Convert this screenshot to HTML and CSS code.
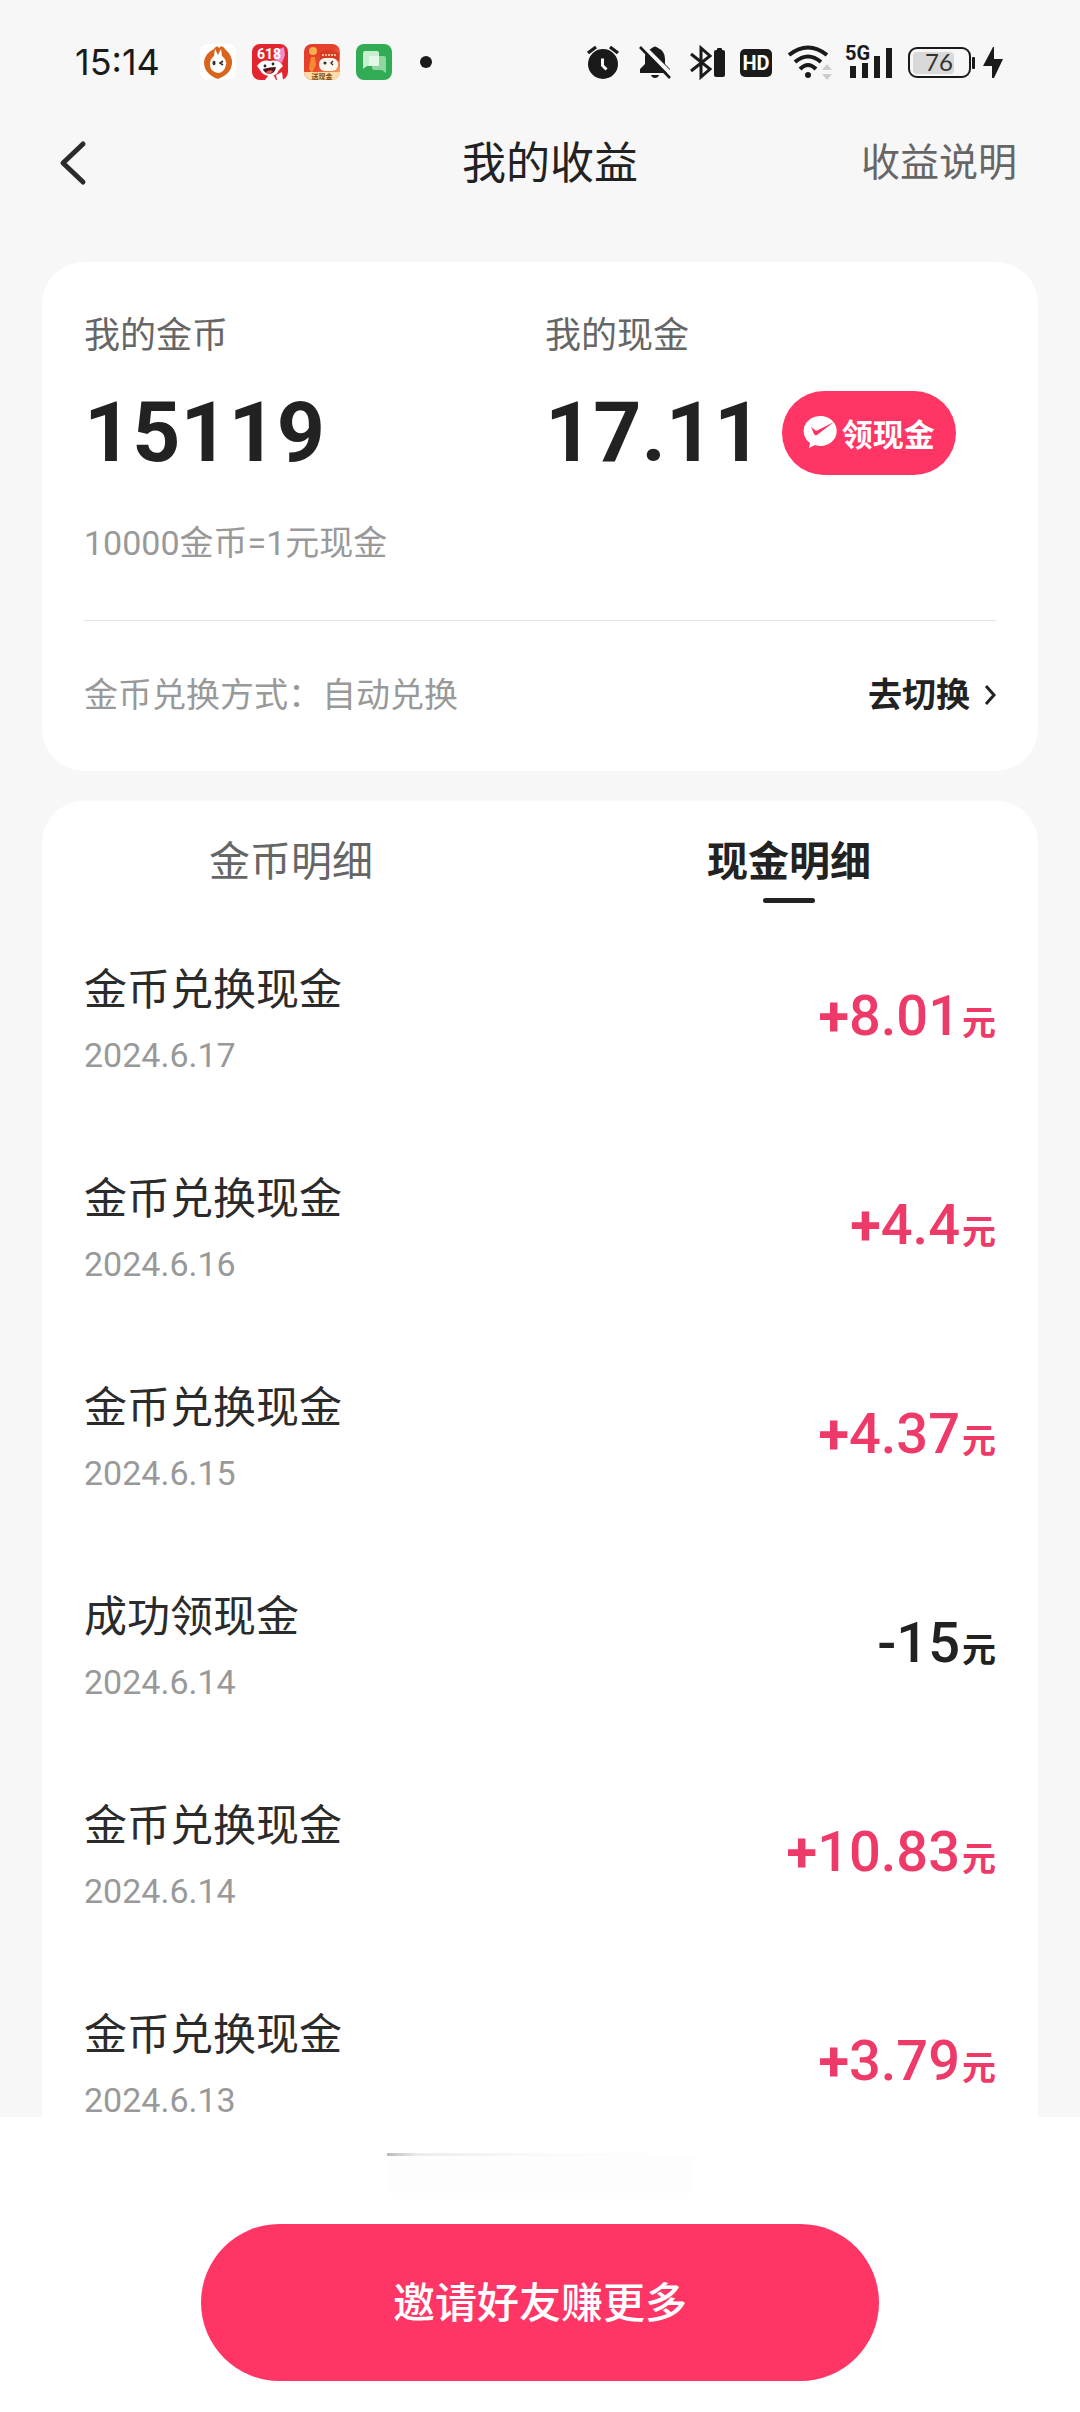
FILE: index.html
```html
<!DOCTYPE html>
<html lang="zh-CN">
<head>
<meta charset="utf-8">
<meta name="viewport" content="width=device-width">
<title>我的收益</title>
<link rel="stylesheet" href="styles.css">
</head>
<body>
<header>
  <div class="status">
    <div class="status-left">
      <span class="clock">15:14</span>
      <div class="apps">
        <svg class="app" viewBox="0 0 36 36" aria-hidden="true">
          <rect width="36" height="36" rx="8" fill="#fff"/>
          <path d="M14 5 Q17 0 19 4 Q22 0 25 5 Q33 12 32 20 Q31 30 18 35 Q4 30 4 18 Q5 9 14 5Z" fill="#d9651c"/>
          <path d="M14 12 L15 5 L18 11 L21 5 L22 12 Q27 16 26 21 Q24 29 18 29 Q10 28 10 20 Q10 15 14 12Z" fill="#fff"/>
          <ellipse cx="14" cy="19" rx="1.6" ry="2.2" fill="#333"/>
          <path d="M23 17l-3 2 3 2" fill="none" stroke="#333" stroke-width="1.6"/>
        </svg>
        <svg class="app" viewBox="0 0 36 36" aria-hidden="true">
          <rect width="36" height="36" rx="8" fill="#e3262d"/>
          <path d="M25 6l7-3 1 8-3 8-8-4z" fill="#f28bd0"/>
          <path d="M5 22 Q10 15 18 17 Q27 15 31 22 L27 26 Q24 33 17 32 Q10 31 8 26Z" fill="#fff"/>
          <path d="M11 25 Q18 23 24 23 Q23 30 17 30 Q12 29 11 25Z" fill="#4a1518"/>
          <path d="M14 28q4-3 7-1-2 3-4 3-2 0-3-2z" fill="#f0584f"/>
          <path d="M13 36l3-4h6l2 4zM25 36l-1-5 6-3 1 8z" fill="#fff"/>
          <circle cx="13" cy="22" r="1.4" fill="#222"/><circle cx="21" cy="20" r="1.4" fill="#222"/>
          <text class="app-618" x="17" y="15" text-anchor="middle">618</text>
        </svg>
        <svg class="app" viewBox="0 0 36 36" aria-hidden="true">
          <defs><clipPath id="c3"><rect width="36" height="36" rx="8"/></clipPath>
          <linearGradient id="g3" x1="0" y1="0" x2="1" y2="1"><stop offset="0" stop-color="#e03a2b"/><stop offset=".5" stop-color="#e8452c"/><stop offset="1" stop-color="#f7c069"/></linearGradient></defs>
          <g clip-path="url(#c3)">
            <rect width="36" height="36" fill="url(#g3)"/>
            <circle cx="9" cy="7" r="4" fill="#f9b04d"/>
            <path d="M7 13l4 0 1 8-4 8-3-4z" fill="#f58a32"/>
            <path d="M16 9 Q25 2 35 9 V17 H16Z" fill="#d83a26"/>
            <path d="M18 11h15" stroke="#f5b985" stroke-width="2" stroke-dasharray="2 1"/>
            <rect x="15" y="14" width="19" height="13" rx="6" fill="#fff6ee"/>
            <circle cx="21" cy="19" r="1.6" fill="#333"/><path d="M29 17l-2 2 2 2" fill="none" stroke="#333" stroke-width="1.4"/>
            <rect y="28" width="36" height="8" fill="#fbdca6"/>
          </g>
          <text class="app-tag" x="18" y="35" text-anchor="middle">送现金</text>
        </svg>
        <svg class="app" viewBox="0 0 36 36" aria-hidden="true">
          <rect width="36" height="36" rx="8" fill="#31ac54"/>
          <path d="M17 12h11q2 0 2 2v15l-4-3H18q-2 0-2-2z" fill="#8fd6a0"/>
          <path d="M9 7h12q2 0 2 2v11q0 2-2 2H11l-4 3V9q0-2 2-2z" fill="#c9efd1"/>
          <rect x="13" y="12" width="10" height="10" rx="1" fill="#e3f8e7"/>
        </svg>
        <span class="dot"></span>
      </div>
    </div>
    <div class="status-right">
      <svg width="36" height="36" viewBox="0 0 36 36" aria-hidden="true">
        <circle cx="16" cy="20" r="15" fill="#1a1a1a"/>
        <path d="M1 9l8-6M31 9l-8-6" stroke="#1a1a1a" stroke-width="3.4"/>
        <path d="M15.500 14.500v7l4 4" fill="none" stroke="#f7f7f7" stroke-width="3"/>
      </svg>
      <svg width="37" height="36" viewBox="0 0 37 36" aria-hidden="true">
        <path d="M14 4q3-3 6 0 7 3 7 11v5l5 5v4H2v-4l5-5v-7q0-5 4-7z" fill="#1a1a1a"/>
        <path d="M13 31h8q-1 3-4 3t-4-3z" fill="#1a1a1a"/>
        <path d="M4 1L35 32" stroke="#f7f7f7" stroke-width="4"/>
        <path d="M2 3L32 34" stroke="#1a1a1a" stroke-width="2.600"/>
      </svg>
      <svg width="35" height="36" viewBox="0 0 35 36" aria-hidden="true">
        <path d="M1 10l19 15-9 8V4l9 8L1 27" fill="none" stroke="#1a1a1a" stroke-width="3"/>
        <rect x="24" y="6" width="11" height="27" rx="2" fill="#1a1a1a"/><rect x="27" y="4" width="5" height="3" rx="1" fill="#1a1a1a"/>
      </svg>
      <svg width="33" height="36" viewBox="0 0 33 36" aria-hidden="true">
        <rect y="5" width="32" height="28" rx="5" fill="#1a1a1a"/>
        <text class="hd" x="16" y="26" text-anchor="middle">HD</text>
      </svg>
      <svg width="44" height="36" viewBox="0 0 44 36" aria-hidden="true">
        <g fill="none" stroke="#1a1a1a" stroke-width="4"><path d="M1 11q19-15 38 0"/><path d="M7 18q13-11 26 0"/><path d="M12 25q8-8 16 0"/></g>
        <circle cx="20" cy="31" r="3" fill="#1a1a1a"/>
        <path d="M34 26l5-6 5 6zM34 30h10l-5 6z" fill="#ccc"/>
      </svg>
      <svg width="46" height="36" viewBox="0 0 46 36" aria-hidden="true">
        <path d="M3 22h6v12H3zM15 19h6v15h-6zM27 12h6v22h-6zM39 4h6v30h-6z" fill="#1a1a1a"/>
        <text class="net" x="-2" y="16">5G</text>
      </svg>
      <svg width="95" height="36" viewBox="0 0 95 36" aria-hidden="true">
        <rect x="1" y="4" width="61" height="29" rx="8" fill="none" stroke="#1a1a1a" stroke-width="2"/>
        <rect x="5" y="8" width="41" height="22" rx="4" fill="#d9d9d9"/>
        <rect x="64" y="13" width="3" height="12" rx="1" fill="#1a1a1a"/>
        <text class="level" x="31" y="27" text-anchor="middle">76</text>
        <path d="M85 3L75 22h9l0 12h2l9-19h-9V3z" fill="#1a1a1a"/>
      </svg>
    </div>
  </div>
  <nav class="nav">
    <button class="back" type="button" aria-label="返回">
      <svg width="28" height="46" viewBox="0 0 28 46" aria-hidden="true"><path d="M24 4L4 23l20 19" fill="none" stroke="#2b2b2b" stroke-width="5" stroke-linecap="round" stroke-linejoin="round"/></svg>
    </button>
    <h1 class="title">我的收益</h1>
    <a class="help" href="#help">收益说明</a>
  </nav>
</header>

<main>
  <section class="card">
    <div class="balances">
      <div>
        <div class="label">我的金币</div>
        <div class="value"><span class="figure">15119</span></div>
      </div>
      <div>
        <div class="label">我的现金</div>
        <div class="value">
          <span class="figure">17.11</span>
          <button class="cash" type="button">
            <svg width="32" height="32" viewBox="0 0 32 32" aria-hidden="true"><path d="M16 0a16 15 0 1 1-5 29l-6 3 1-5A16 15 0 0 1 16 0z" fill="#fff"/><path d="M7 11l4 3q1 1 3 0L30 6 13 19q-2 1-3-1z" fill="#ff3565"/></svg>
            领现金
          </button>
        </div>
      </div>
    </div>
    <p class="rate">10000金币=1元现金</p>
    <div class="method">
      <span>金币兑换方式：自动兑换</span>
      <a class="switch" href="#switch">去切换
        <svg width="12" height="20" viewBox="0 0 12 20" aria-hidden="true"><path d="M2 1l8 9-8 9" fill="none" stroke="#222" stroke-width="3"/></svg>
      </a>
    </div>
  </section>

  <section class="card">
    <div class="tabs" role="tablist">
      <button class="tab" type="button" role="tab" aria-selected="false">金币明细</button>
      <button class="tab active" type="button" role="tab" aria-selected="true">现金明细</button>
    </div>
    <ul class="list">
      <li class="row"><div><div class="name">金币兑换现金</div><time class="date">2024.6.17</time></div><div class="amount"><span class="sign">+</span>8.01<span class="unit">元</span></div></li>
      <li class="row"><div><div class="name">金币兑换现金</div><time class="date">2024.6.16</time></div><div class="amount"><span class="sign">+</span>4.4<span class="unit">元</span></div></li>
      <li class="row"><div><div class="name">金币兑换现金</div><time class="date">2024.6.15</time></div><div class="amount"><span class="sign">+</span>4.37<span class="unit">元</span></div></li>
      <li class="row"><div><div class="name">成功领现金</div><time class="date">2024.6.14</time></div><div class="amount out">-15<span class="unit">元</span></div></li>
      <li class="row"><div><div class="name">金币兑换现金</div><time class="date">2024.6.14</time></div><div class="amount"><span class="sign">+</span>10.83<span class="unit">元</span></div></li>
      <li class="row"><div><div class="name">金币兑换现金</div><time class="date">2024.6.13</time></div><div class="amount"><span class="sign">+</span>3.79<span class="unit">元</span></div></li>
    </ul>
  </section>
</main>

<footer class="footer">
  <div class="streak"></div>
  <button class="invite" type="button">邀请好友赚更多</button>
</footer>
</body>
</html>
```
FILE: styles.css
```css
* { box-sizing: border-box; }

body {
  margin: 0;
  height: 100vh;
  display: flex;
  flex-direction: column;
  background: #f7f7f7;
  color: #222;
  font-family: Roboto, "Noto Sans CJK SC", sans-serif;
}

button {
  border: 0;
  padding: 0;
  background: none;
  color: inherit;
  font: inherit;
}

a { color: inherit; text-decoration: none; }
svg { display: block; flex: none; overflow: visible; }
h1, p, ul { margin: 0; padding: 0; font-weight: 400; }

/* Status bar */
.status {
  height: 124px;
  padding: 0 77px 0 75px;
  display: flex;
  align-items: center;
  justify-content: space-between;
}
.status-left { display: flex; align-items: center; gap: 40px; }
.clock { font-family: Inter, Roboto, sans-serif; font-size: 36px; line-height: 40px; color: #1a1a1a; }
.apps { display: flex; align-items: center; gap: 16px; }
.app { width: 36px; height: 36px; }
.app-618 { font: 700 14px Roboto, sans-serif; fill: #fff; }
.app-tag { font: 700 7px "Noto Sans CJK SC", sans-serif; fill: #7a4a20; }
.dot { width: 12px; height: 12px; margin-left: 12px; border-radius: 50%; background: #1a1a1a; }
.status-right { display: flex; align-items: center; gap: 15px; }
.hd { font: 700 20px Roboto, sans-serif; fill: #fff; }
.net { font: 700 20px Roboto, sans-serif; fill: #1a1a1a; }
.level { font: 400 24px Lato, sans-serif; fill: #333; }

/* Navigation */
.nav {
  height: 78px;
  padding: 0 63px 0 83px;
  display: grid;
  grid-template-columns: 1fr auto 1fr;
  align-items: center;
}
.back { justify-self: start; margin-left: -24px; }
.title { padding-top: 2px; font-size: 44px; line-height: 60px; }
.help { justify-self: end; font-size: 39px; line-height: 60px; color: #666; }

/* Cards */
main {
  flex: 1;
  min-height: 0;
  overflow: hidden;
  padding: 60px 42px 0;
}
.card {
  padding: 0 42px;
  border-radius: 42px;
  background: #fff;
}
.card + .card { margin-top: 30px; border-radius: 42px 42px 0 0; }

.balances {
  padding-top: 49px;
  display: grid;
  grid-template-columns: 1fr 1fr;
  column-gap: 10px;
}
.label { font-size: 36px; line-height: 50px; color: #666; }
.value { margin-top: 30px; height: 84px; display: flex; align-items: center; gap: 20px; }
.figure { font-size: 84px; line-height: 84px; font-weight: 700; }
.cash {
  width: 174px;
  height: 84px;
  padding-bottom: 2px;
  display: flex;
  align-items: center;
  justify-content: center;
  gap: 6px;
  border-radius: 42px;
  background: #ff3565;
  color: #fff;
  font-size: 31px;
  font-weight: 700;
}
.rate { margin-top: 48px; font-size: 34px; line-height: 40px; color: #999; }
.method {
  margin-top: 57px;
  padding: 52px 0 54px;
  border-top: 1px solid #e2e2e2;
  display: flex;
  justify-content: space-between;
  font-size: 34px;
  line-height: 44px;
  color: #999;
}
.switch { display: flex; align-items: center; gap: 14px; font-weight: 700; color: #222; }

/* Income records */
.tabs { margin: 0 -42px; height: 110px; padding-top: 36px; display: grid; grid-template-columns: 1fr 1fr; align-items: start; }
.tab { font-size: 41px; line-height: 50px; color: #666; }
.active { font-weight: 700; color: #222; }
.active::after {
  content: "";
  display: block;
  width: 52px;
  height: 5px;
  margin: 11px auto 0;
  border-radius: 3px;
  background: #222;
}
.list { list-style: none; }
.row { padding: 49px 0; display: flex; align-items: center; justify-content: space-between; }
.name { font-size: 43px; line-height: 60px; color: #2b2b2b; }
.date { display: block; margin-top: 19px; font-size: 34px; line-height: 32px; color: #999; }
.amount { padding-top: 8px; font-size: 56px; line-height: 60px; font-weight: 500; color: #ee3a68; }
.amount.out { color: #222; }
.sign { font-weight: 700; }
.unit { font-size: 34px; font-weight: 700; margin-left: 2px; }

/* Bottom bar */
.footer {
  padding: 36px 42px 31px;
  display: flex;
  flex-direction: column;
  align-items: center;
  background: #fff;
}
.streak {
  width: 306px;
  height: 40px;
  margin-bottom: 31px;
  background: linear-gradient(90deg, #bbb, #ececec 10%, #fafafa 50%, #fff) top / 100% 3px no-repeat, #fdfdfd;
}
.invite {
  width: 678px;
  max-width: 100%;
  height: 157px;
  padding-bottom: 6px;
  border-radius: 79px;
  background: #ff3565;
  color: #fff;
  font-size: 42px;
  font-weight: 500;
}
```
